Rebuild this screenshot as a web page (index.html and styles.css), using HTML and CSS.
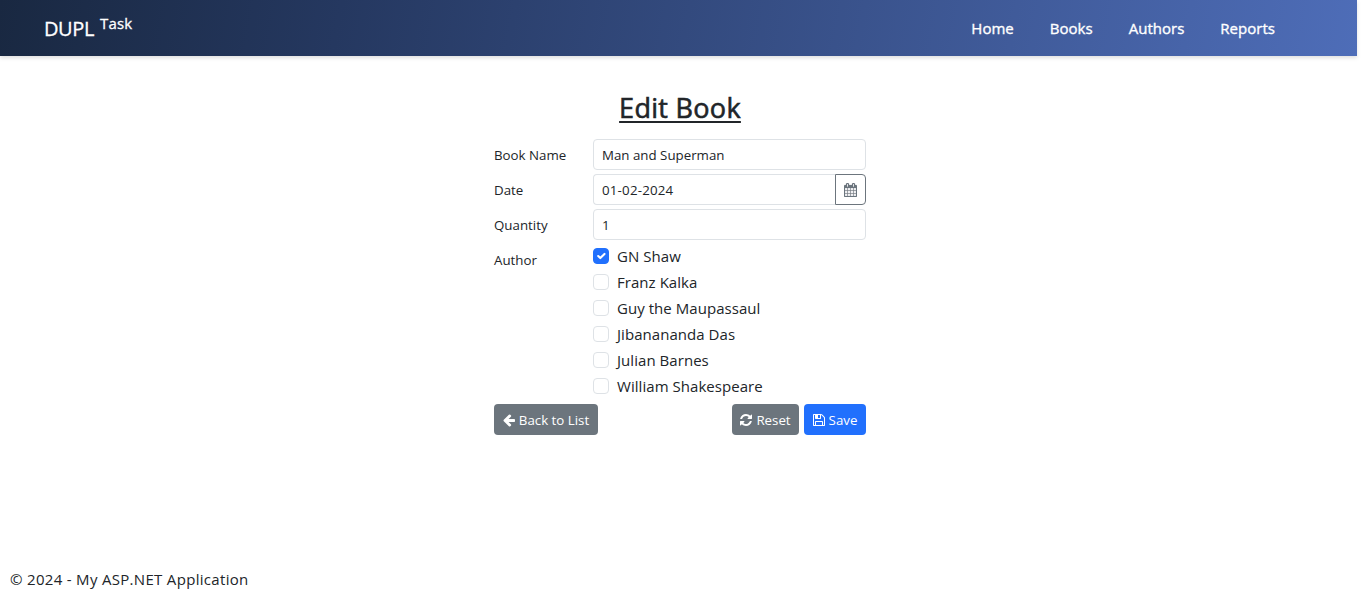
FILE: index.html
```html
<!DOCTYPE html>
<html lang="en">
<head>
<meta charset="utf-8">
<title>Edit Book</title>
<link rel="stylesheet" href="styles.css">
</head>
<body>
<div class="page">
  <header class="navbar">
    <a class="brand">DUPL <sup>Task</sup></a>
    <nav class="nav"><a>Home</a><a>Books</a><a>Authors</a><a>Reports</a></nav>
  </header>
  <main class="form">
    <h3 class="title"><span>Edit Book</span></h3>
    <div class="row"><label>Book Name</label><div class="control name">Man and Superman</div></div>
    <div class="row"><label>Date</label><div class="group"><div class="control date">01-02-2024</div><button class="picker"><svg class="cal" viewBox="64 0 1664 1792"><path d="M192 1664h288v-288h-288v288zm352 0h320v-288h-320v288zm-352-352h288v-320h-288v320zm352 0h320v-320h-320v320zm-352-384h288v-288h-288v288zm736 736h320v-288h-320v288zm-384-736h320v-288h-320v288zm768 736h288v-288h-288v288zm-384-352h320v-320h-320v320zm-352-864v-288q0-13-9.500-22.500t-22.500-9.500h-64q-13 0-22.500 9.500t-9.500 22.500v288q0 13 9.500 22.500t22.500 9.500h64q13 0 22.500-9.500t9.500-22.500zm736 864h288v-320h-288v320zm-384-384h320v-288h-320v288zm384 0h288v-288h-288v288zm32-480v-288q0-13-9.500-22.500t-22.500-9.500h-64q-13 0-22.500 9.500t-9.500 22.500v288q0 13 9.500 22.500t22.500 9.500h64q13 0 22.500-9.500t9.500-22.500zm384-64v1280q0 52-38 90t-90 38h-1408q-52 0-90-38t-38-90v-1280q0-52 38-90t90-38h128v-96q0-66 47-113t113-47h64q66 0 113 47t47 113v96h384v-96q0-66 47-113t113-47h64q66 0 113 47t47 113v96h128q52 0 90 38t38 90z"/></svg></button></div></div>
    <div class="row"><label>Quantity</label><div class="control">1</div></div>
    <div class="row authors"><label>Author</label>
      <div class="checks">
        <div class="check"><i class="box on"><svg viewBox="0 0 20 20"><path d="m6 10 3 3 6-6"/></svg></i><span>GN Shaw</span></div>
        <div class="check"><i class="box"></i><span>Franz Kalka</span></div>
        <div class="check"><i class="box"></i><span>Guy the Maupassaul</span></div>
        <div class="check"><i class="box"></i><span>Jibanananda Das</span></div>
        <div class="check"><i class="box"></i><span>Julian Barnes</span></div>
        <div class="check"><i class="box"></i><span>William Shakespeare</span></div>
      </div>
    </div>
    <div class="actions">
      <button class="btn back"><svg viewBox="0 0 1792 1792"><path d="M1664 896v128q0 53-32.500 90.500t-84.500 37.500h-704l293 294q38 36 38 90t-38 90l-75 76q-37 37-90 37-52 0-91-37l-651-652q-37-37-37-90 0-52 37-91l651-650q38-38 91-38 52 0 90 38l75 74q38 38 38 91t-38 91l-293 293h704q52 0 84.500 37.500t32.500 90.500z"/></svg><span>Back to List</span></button>
      <button class="btn reset"><svg viewBox="0 0 1792 1792"><path d="M1639 1056q0 5-1 7-64 268-268 434.500t-478 166.500q-146 0-282.500-55t-243.500-157l-129 129q-19 19-45 19t-45-19-19-45v-448q0-26 19-45t45-19h448q26 0 45 19t19 45-19 45l-137 137q71 66 161 102t187 36q134 0 250-65t186-179q11-17 53-117 8-23 30-23h192q13 0 22.500 9.500t9.500 22.500zm25-800v448q0 26-19 45t-45 19h-448q-26 0-45-19t-19-45 19-45l138-138q-148-137-349-137-134 0-250 65t-186 179q-11 17-53 117-8 23-30 23h-199q-13 0-22.500-9.500t-9.500-22.500v-7q65-268 270-434.500t480-166.500q146 0 284 55.500t245 156.500l130-129q19-19 45-19t45 19 19 45z"/></svg><span>Reset</span></button>
      <button class="btn save"><svg viewBox="0 0 1792 1792"><path d="M512 1536h768v-384h-768v384zm896 0h128v-896q0-14-10-38.500t-20-34.500l-281-281q-10-10-34-20t-39-10v416q0 40-28 68t-68 28h-576q-40 0-68-28t-28-68v-416h-128v1280h128v-416q0-40 28-68t68-28h832q40 0 68 28t28 68v416zm-384-928v-320q0-13-9.500-22.500t-22.500-9.500h-192q-13 0-22.500 9.500t-9.500 22.500v320q0 13 9.500 22.500t22.500 9.500h192q13 0 22.500-9.500t9.500-22.500zm640 32v928q0 40-28 68t-68 28h-1344q-40 0-68-28t-28-68v-1344q0-40 28-68t68-28h928q40 0 88 20t76 48l280 280q28 28 48 76t20 88z"/></svg><span>Save</span></button>
    </div>
  </main>
  <footer class="footer">© 2024 - My ASP.NET Application</footer>
</div>
</body>
</html>
```
FILE: styles.css
```css
* { box-sizing: border-box; }
body { margin: 0; background: #fff; color: #212529; font-family: "Open Sans", "Noto Sans", sans-serif; font-size: 15px; }
.page { width: 1357px; height: 612px; display: flex; flex-direction: column; }
.navbar { height: 56px; flex: none; display: flex; align-items: center; justify-content: space-between; padding: 0 82px 0 44px; color: #fff; background: linear-gradient(100deg, #192841, #253860 25%, #4e6db8); box-shadow: 0 2px 4px rgba(0,0,0,.13); }
.brand { font-size: 20px; line-height: 30px; letter-spacing: -.4px; display: flex; gap: 6px; padding-top: 1px; -webkit-text-stroke: .3px; }
.brand sup { font-size: 15px; line-height: 22px; vertical-align: baseline; letter-spacing: .2px; margin-top: -2px; }
.nav { display: flex; gap: 36px; font-size: 15px; line-height: 24px; letter-spacing: .02px; -webkit-text-stroke: .35px; margin-top: -1px; }
.form { width: 372px; margin: 35px 0 0 494px; display: flex; flex-direction: column; gap: 4px; }
.title { margin: 0 0 9px; height: 35px; font-size: 27px; font-weight: 400; letter-spacing: .3px; -webkit-text-stroke: .6px; line-height: 34px; text-align: center; }
.title span { text-decoration: underline; text-decoration-thickness: 2px; text-underline-offset: 3px; }
.row { display: grid; grid-template-columns: 99px 273px; font-size: 13.3px; line-height: 21px; }
.row > label { padding-top: 6px; }
.control { height: 31px; border: 1px solid #dee2e6; border-radius: 4px; padding: 5px 8px; flex: 1; }
.group { display: flex; }
.date { border-right: 0; border-radius: 4px 0 0 4px; letter-spacing: .2px; }
.picker { width: 31px; height: 31px; border: 1px solid #6c757d; border-radius: 0 4px 4px 0; background: #fff; padding: 0; display: flex; align-items: center; justify-content: center; }
.cal { width: 13px; height: 14px; fill: #6c757d; stroke: #6c757d; stroke-width: 25; }
.checks { font-size: 15px; letter-spacing: .05px; }
.check { height: 26px; display: flex; align-items: flex-start; gap: 8px; line-height: 24px; }
.box { width: 16px; height: 16px; margin-top: 4px; border: 1px solid #dee2e6; border-radius: 4px; display: block; flex: none; }
.box.on { background: #2170fd; border-color: #2170fd; }
.box svg { display: block; width: 14px; height: 14px; fill: none; stroke: #fff; stroke-width: 3; stroke-linecap: round; stroke-linejoin: round; }
.actions { display: flex; gap: 5px; }
.btn { height: 31px; border: 0; border-radius: 4px; background: #6c757d; color: #fff; font: inherit; font-size: 13.3px; padding: 1px 1px 0 0; display: flex; align-items: center; justify-content: center; gap: 3px; white-space: nowrap; }
.btn svg { width: 14px; height: 14px; fill: #fff; flex: none; }
.back { width: 104px; margin-right: auto; }
.reset { width: 67px; }
.save { width: 62px; background: #2170fd; }
.footer { margin: auto 0 21px 10px; line-height: 24px; letter-spacing: .31px; }
```
